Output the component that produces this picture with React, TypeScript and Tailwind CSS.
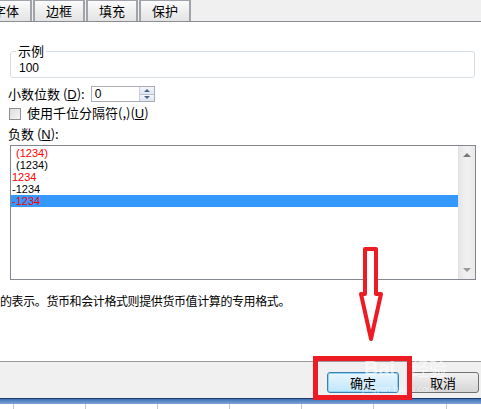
import React from "react";

const cjk = "font-['Noto_Sans_CJK_SC','Liberation_Sans',sans-serif]";
const latin = "font-['Liberation_Sans','Noto_Sans_CJK_SC',sans-serif]";

const tabs = ["边框", "填充", "保护"];

const negatives = [
  { text: "(1234)", red: true, indent: true },
  { text: "(1234)", red: false, indent: true },
  { text: "1234", red: true, indent: false },
  { text: "-1234", red: false, indent: false },
  { text: "-1234", red: true, indent: false, selected: true },
];

const gridLines = [14, 72, 72, 72, 72, 72, 73];

function Tab({ label, className = "" }: { label: string; className?: string }) {
  return (
    <div
      className={`h-[21px] w-[52px] shrink-0 flex items-center justify-center border-x-2 border-t border-[#a0a3aa] bg-gradient-to-b from-[#fbfbfb] to-[#e3e3e3] text-[13px] text-black ${className}`}
    >
      {label}
    </div>
  );
}

export default function App() {
  return (
    <div className={`relative w-[481px] h-[409px] overflow-hidden bg-white flex flex-col ${cjk}`}>
      {/* TABS */}
      <div className="h-[22px] shrink-0 flex items-end bg-[#f0f0f0] border-b border-[#898c95]">
        <Tab label="字体" className="-ml-[20px] w-[52px]" />
        {tabs.map((t) => (
          <Tab key={t} label={t} className="ml-[1px]" />
        ))}
      </div>

      {/* BODY */}
      <div className="flex-1 flex flex-col">
        <fieldset className="mt-[22px] mx-[10px] w-[465px] h-[34px] border border-[#d5dfe5] rounded-[3px] px-[7px] pb-[4px]">
          <legend className="px-[2px] -ml-[2px] text-[13px] leading-[14px] text-black">示例</legend>
          <div className={`${latin} text-[12px] leading-[14px] pt-[3px] pl-[1px]`}>100</div>
        </fieldset>

        <div className="mt-[8px] ml-[8px] h-[16px] flex items-center gap-[6px] text-[13px] text-black">
          <span>
            小数位数 (<u className={latin}>D</u>):
          </span>
          <div className="w-[64px] h-[16px] flex border border-[#abadb3] bg-white">
            <div className={`flex-1 pl-[3px] ${latin} text-[12px] leading-[14px]`}>0</div>
            <div className="w-[15px] flex flex-col border-l border-[#c8cdd5]">
              <div className="flex-1 flex items-center justify-center bg-gradient-to-b from-[#f4f7fb] to-[#dde6f1] border-b border-[#b6c2d3]">
                <span className="block w-0 h-0 border-x-[3px] border-x-transparent border-b-[3px] border-b-[#4d6185]" />
              </div>
              <div className="flex-1 flex items-center justify-center bg-gradient-to-b from-[#f4f7fb] to-[#dde6f1]">
                <span className="block w-0 h-0 border-x-[3px] border-x-transparent border-t-[3px] border-t-[#4d6185]" />
              </div>
            </div>
          </div>
        </div>

        <div className="mt-[5px] ml-[9px] h-[13px] flex items-center gap-[6px] text-[13px] text-black">
          <span className="w-[12px] h-[12px] border border-[#8f8f8f] bg-gradient-to-br from-[#dcdcdc] to-[#f6f6f6]" />
          <span>
            使用千位分隔符(,)(<u className={latin}>U</u>)
          </span>
        </div>

        <div className="mt-[6px] ml-[8px] text-[13px] leading-[16px] text-black">
          负数 (<u className={latin}>N</u>):
        </div>

        <div className="mt-[2px] ml-[10px] w-[466px] h-[135px] border border-[#828790] flex">
          <div className="flex-1 pt-[1px]">
            {negatives.map((n, i) => (
              <div
                key={i}
                className={`h-[12px] ${latin} text-[11px] leading-[12px] ${n.indent ? "pl-[5px]" : "pl-[1px]"} ${
                  n.red ? "text-[#ff0000]" : "text-black"
                } ${n.selected ? "bg-[#3399ff]" : ""}`}
              >
                {n.text}
              </div>
            ))}
          </div>
          <div className="w-[17px] flex flex-col justify-between items-center bg-gradient-to-r from-[#e6e6e6] via-[#f2f2f2] to-[#e9e9e9] border-l border-[#e0e0e0] py-[7px]">
            <span className="block w-0 h-0 border-x-[4px] border-x-transparent border-b-[4px] border-b-[#7a7a7a]" />
            <span className="block w-0 h-0 border-x-[4px] border-x-transparent border-t-[4px] border-t-[#9a9a9a]" />
          </div>
        </div>

        <p className="mt-[13px] text-[12px] tracking-[-0.4px] leading-[16px] text-black whitespace-nowrap">
          的表示。货币和会计格式则提供货币值计算的专用格式。
        </p>

        <div className="flex-1" />

        {/* BUTTON BAR */}
        <div className="h-[37px] shrink-0 bg-[#f0f0f0] border-t border-[#9a9a9a] flex items-start pt-[10px] pl-[327px] gap-[8px]">
          <button className="w-[72px] h-[21px] rounded-[3px] border border-[#3c7fb1] bg-gradient-to-b from-[#eaf6fd] to-[#bee6fd] text-[13px] leading-[19px] text-black shadow-[inset_0_0_0_1px_#8fd3f8]">
            确定
          </button>
          <button className="w-[72px] h-[21px] rounded-[3px] border border-[#707070] bg-gradient-to-b from-[#f2f2f2] to-[#d5d5d5] text-[13px] leading-[19px] text-black">
            取消
          </button>
        </div>

        {/* SHEET BELOW */}
        <div className="h-[6px] shrink-0 border-t border-[#1e3b66] bg-gradient-to-b from-[#3f6fb6] to-[#7fa3d8]" />
        <div className="h-[5px] shrink-0 flex bg-white">
          {gridLines.map((w, i) => (
            <div key={i} style={{ width: w }} className="shrink-0 border-r border-[#c6c6c6]" />
          ))}
        </div>
      </div>

      {/* WATERMARK */}
      <div className="absolute left-[364px] top-[358px] flex items-end gap-[2px] text-white/60 pointer-events-none">
        <span className={`${latin} text-[20px] font-bold leading-[20px]`}>Bai</span>
        <span className="text-[18px] leading-[20px] ml-[14px]">经验</span>
      </div>
      <div className={`absolute left-[362px] top-[384px] ${latin} text-[9px] leading-[10px] text-white/60 pointer-events-none`}>
        jingyan.baidu.com
      </div>

      {/* ANNOTATIONS */}
      <svg className="absolute left-[358px] top-[247px]" width="26" height="96" viewBox="0 0 26 96">
        <polygon
          points="7,2 18,2 18,47 23,47 13,92 3,47 7,47"
          fill="white"
          stroke="#ed1c24"
          strokeWidth="4"
          strokeLinejoin="round"
        />
      </svg>
      <div className="absolute left-[313px] top-[356px] w-[99px] h-[44px] border-[5px] border-[#ed1c24]" />
    </div>
  );
}
